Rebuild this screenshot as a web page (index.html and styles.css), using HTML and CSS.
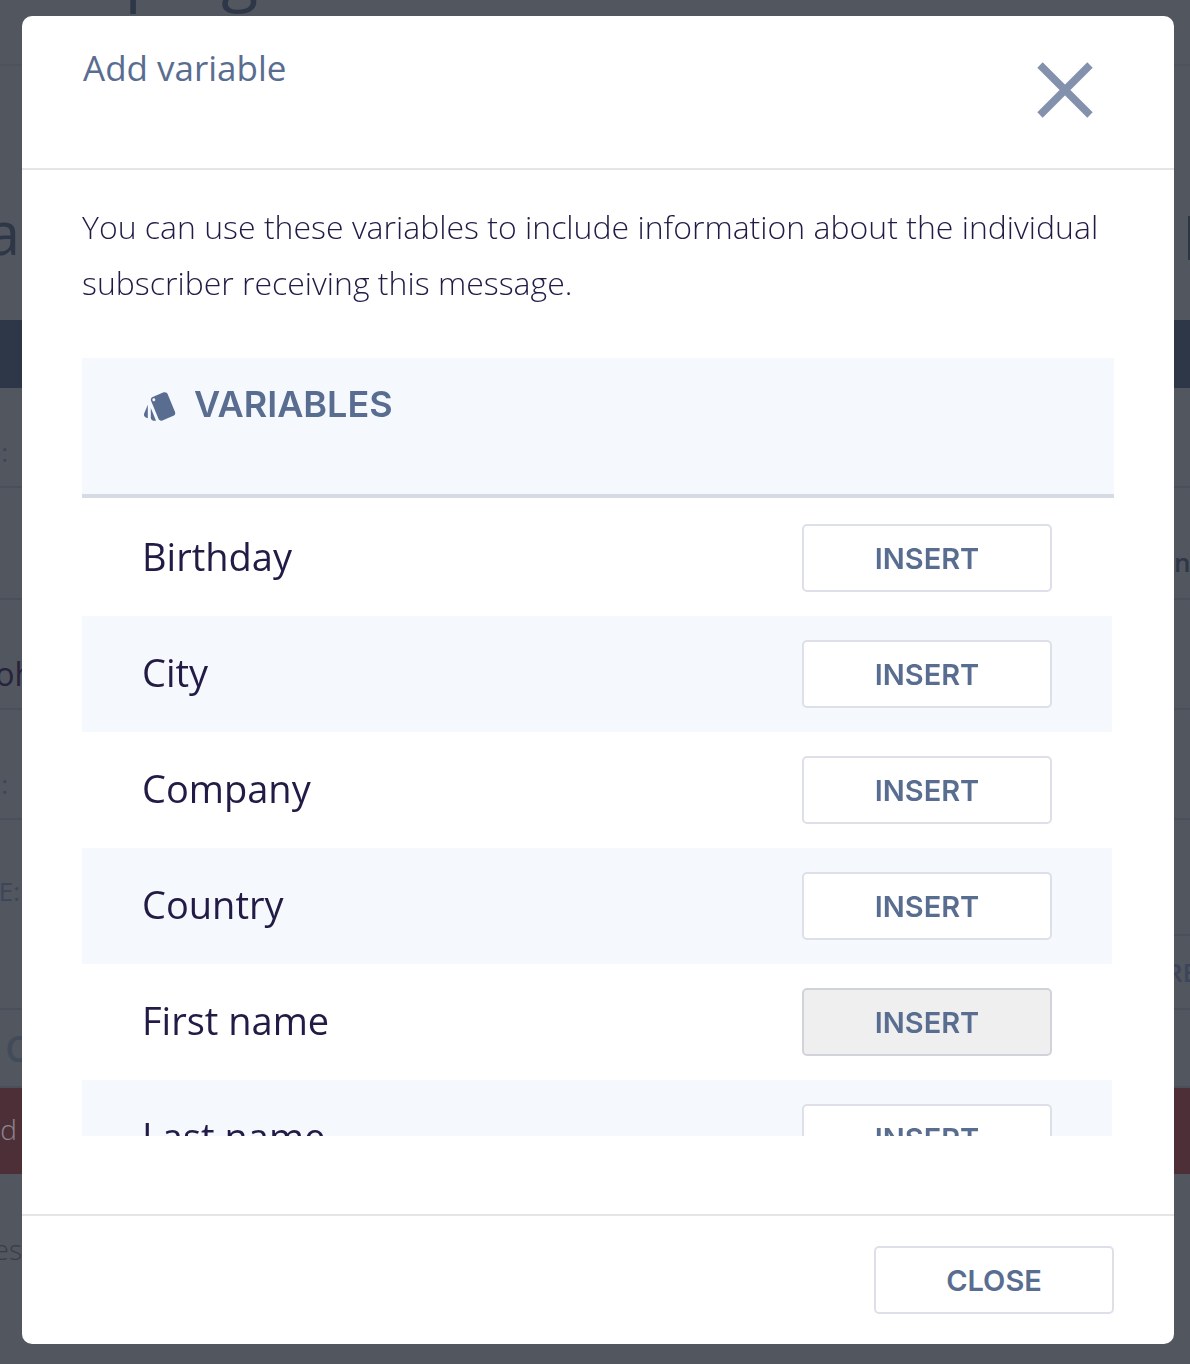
FILE: index.html
```html
<!DOCTYPE html>
<html lang="en">
<head>
  <meta charset="UTF-8" />
  <meta name="viewport" content="width=device-width, initial-scale=1.0"/>
  <title>Add variable</title>
  <link rel="stylesheet" href="styles.css">
</head>
<body>
  <!-- dimmed page behind the dialog -->
  <div class="page" aria-hidden="true">
    <div class="page-top"><span class="page-title">Campaign</span></div>
    <div class="page-heading">
      <span class="edge edge-xl">a</span>
      <span class="page-button"></span>
    </div>
    <div class="page-bar"></div>
    <div class="page-row row-first"><span class="edge edge-colon">:</span></div>
    <div class="page-row row-link"><span class="edge"></span><span class="edge-right">n</span></div>
    <div class="page-row row-name"><span class="edge edge-name">oh</span></div>
    <div class="page-row"><span class="edge edge-colon">:</span></div>
    <div class="page-row row-tall">
      <span class="edge edge-label">E:</span>
      <div class="page-side"><span>RE</span></div>
    </div>
    <div class="page-row row-tools"><span class="edge edge-tool">C</span></div>
    <div class="page-alert"><span class="edge edge-alert">d</span></div>
    <div class="page-note"><span class="edge edge-note">es</span></div>
  </div>

  <div class="overlay">
    <div class="modal" role="dialog" aria-labelledby="modalTitle">
      <div class="modal-header">
        <h1 id="modalTitle">Add variable</h1>
        <button class="close-icon" aria-label="Close dialog">
          <svg viewBox="0 0 56 56" width="56" height="56">
            <path d="M3 3L53 53M53 3L3 53" stroke="currentColor" stroke-width="7.6" fill="none"/>
          </svg>
        </button>
      </div>

      <div class="modal-body">
        <p>You can use these variables to include information about the individual subscriber receiving this message.</p>

        <div class="variables">
          <div class="variables-header">
            <svg viewBox="0 0 24 24" width="36" height="36" fill="currentColor">
              <path d="M2.53 19.65l1.34.56v-9.03l-2.43 5.86c-.41 1.02.08 2.19 1.09 2.61zm19.5-3.7L17.07 3.98c-.31-.75-1.04-1.21-1.81-1.23-.26 0-.53.04-.79.15L7.1 5.95c-.75.31-1.21 1.03-1.23 1.8-.01.27.04.54.15.8l4.96 11.97c.31.76 1.05 1.22 1.83 1.23.26 0 .52-.05.77-.15l7.36-3.05c1.02-.42 1.51-1.59 1.09-2.6zM7.88 8.75c-.55 0-1-.45-1-1s.45-1 1-1 1 .45 1 1-.45 1-1 1zm-2 11c0 1.1.9 2 2 2h1.45l-3.45-8.34v6.34z"/>
            </svg>
            <h2>VARIABLES</h2>
          </div>
          <ul class="variable-list">
            <li><span>Birthday</span><button class="btn btn-insert">INSERT</button></li>
            <li><span>City</span><button class="btn btn-insert">INSERT</button></li>
            <li><span>Company</span><button class="btn btn-insert">INSERT</button></li>
            <li><span>Country</span><button class="btn btn-insert">INSERT</button></li>
            <li><span>First name</span><button class="btn btn-insert active">INSERT</button></li>
            <li><span>Last name</span><button class="btn btn-insert">INSERT</button></li>
          </ul>
        </div>
      </div>

      <div class="modal-footer">
        <button class="btn btn-close">CLOSE</button>
      </div>
    </div>
  </div>
</body>
</html>
```
FILE: styles.css
```css
* {
  box-sizing: border-box;
}

body {
  margin: 0;
  background: #52565f;
  color: #211b45;
  font-family: 'Open Sans', 'Noto Sans', sans-serif;
}

h1, h2, p, ul {
  margin: 0;
  padding: 0;
}

/* page behind */
.page {
  height: 100vh;
  overflow: hidden;
  color: #2d3748;
}

.page-top {
  height: 66px;
  overflow: hidden;
  border-bottom: 2px solid #4e525d;
}

.page-title {
  display: block;
  margin-left: -19px;
  margin-top: -70px;
  font-size: 68px;
  line-height: 84px;
}

.page-heading {
  display: flex;
  justify-content: space-between;
  align-items: center;
  height: 254px;
  padding-top: 90px;
}

.page-button {
  width: 2px;
  height: 44px;
  background: #2d3543;
}

.page-bar {
  height: 68px;
  background: #2d3748;
}

.edge {
  display: flex;
  justify-content: flex-end;
  width: 22px;
  font-size: 26px;
  white-space: nowrap;
}

.edge-xl {
  width: 20px;
  padding-bottom: 12px;
  font-size: 60px;
}

.edge-colon {
  width: 8px;
  color: #3d455b;
}

.edge-label {
  width: 20px;
  color: #3d455b;
}

.edge-name {
  width: 34px;
  font-size: 32px;
  color: #26233b;
}

.edge-right {
  width: 16px;
  font-size: 26px;
  font-weight: 600;
}

.edge-tool {
  width: 28px;
  font-size: 36px;
  font-weight: 600;
  color: #414b5a;
}

.edge-alert {
  width: 17px;
  padding-bottom: 4px;
  font-size: 28px;
  font-weight: 300;
  color: #8f858e;
}

.edge-note {
  font-size: 28px;
  font-weight: 300;
  color: #393d48;
}

.page-row {
  display: flex;
  justify-content: space-between;
  align-items: center;
  height: 110px;
  border-bottom: 2px solid #4b4f5b;
}

.row-first {
  height: 100px;
  padding-top: 30px;
}

.row-link {
  height: 112px;
  padding-top: 38px;
}

.row-name {
  padding-top: 38px;
}

.row-name + .page-row {
  padding-top: 40px;
}

.row-tall {
  height: 190px;
  padding-bottom: 46px;
}

.page-side {
  align-self: flex-end;
  display: flex;
  align-items: center;
  width: 24px;
  height: 74px;
  margin-bottom: -46px;
  border-top: 2px solid #4b4f5b;
  font-size: 26px;
  font-weight: 600;
  color: #3d455b;
}

.row-tools {
  height: 78px;
}

.page-alert {
  display: flex;
  align-items: center;
  height: 86px;
  background: #4d2f38;
}

.page-note {
  padding-top: 56px;
}

/* dialog */
.overlay {
  position: fixed;
  inset: 0;
  padding: 16px 16px 20px 22px;
}

.modal {
  display: flex;
  flex-direction: column;
  height: 100%;
  background: #fff;
  border-radius: 10px;
}

.modal-header {
  display: flex;
  justify-content: space-between;
  align-items: flex-start;
  padding: 28px 81px 48px 61px;
  border-bottom: 2px solid #e5e5e5;
}

.modal-header h1 {
  font-size: 35px;
  font-weight: 400;
  line-height: 48px;
  color: #596d90;
}

.close-icon {
  display: flex;
  margin-top: 18px;
  margin-bottom: 2px;
  padding: 0;
  border: none;
  background: none;
  color: #8391ad;
  cursor: pointer;
}

.modal-body {
  display: flex;
  flex: 1;
  flex-direction: column;
  min-height: 0;
  padding: 29px 60px 78px;
}

.modal-body p {
  margin-bottom: 47px;
  font-size: 32px;
  font-weight: 300;
  line-height: 56px;
}

.variables {
  flex: 1;
  min-height: 0;
  overflow-y: auto;
  scrollbar-width: none;
}

.variables-header {
  display: flex;
  align-items: flex-start;
  gap: 16px;
  height: 140px;
  padding: 22px 60px;
  border-bottom: 4px solid #d5dbe5;
  background: #f5f8fd;
  color: #596d90;
}

.variables-header svg {
  margin-top: 8px;
}

.variables-header h2 {
  font-family: Inter, sans-serif;
  font-size: 36px;
  font-weight: 600;
  line-height: 48px;
}

.variable-list {
  margin: 2px 2px 0 0;
  list-style: none;
}

.variable-list li {
  display: flex;
  justify-content: space-between;
  align-items: center;
  height: 116px;
  padding: 0 60px;
  font-size: 38px;
}

.variable-list span {
  padding-bottom: 4px;
}

.variable-list li:nth-child(even) {
  background: #f5f8fd;
}

.btn {
  height: 68px;
  padding: 0;
  border: 2px solid #dde0e8;
  border-radius: 5px;
  background: #fff;
  color: #596d90;
  font-family: Inter, sans-serif;
  font-size: 29px;
  font-weight: 600;
  cursor: pointer;
}

.btn-insert {
  width: 250px;
}

.btn-insert:hover,
.btn-insert.active {
  border-color: #d0d4da;
  background: #efefef;
}

.btn-close {
  width: 240px;
}

.modal-footer {
  display: flex;
  justify-content: flex-end;
  padding: 30px 60px;
  border-top: 2px solid #e5e5e5;
}
```
